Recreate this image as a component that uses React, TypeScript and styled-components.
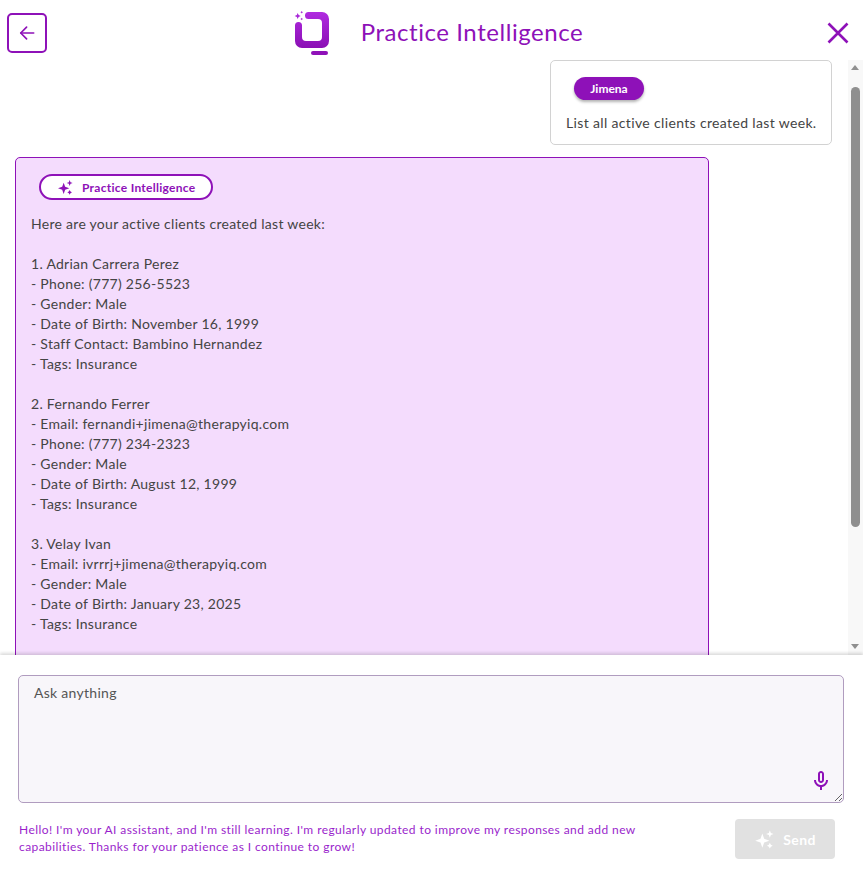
import { FC } from 'react';
import styled, { createGlobalStyle } from 'styled-components';

const PURPLE = '#8e11b8';

const GlobalStyle = createGlobalStyle`
  html, body {
    margin: 0;
    padding: 0;
    height: 100%;
    background: #fff;
  }
  * {
    box-sizing: border-box;
  }
  body {
    font-family: 'Lato', 'Open Sans', sans-serif;
    color: #444;
    overflow: hidden;
  }
`;

const SparkleIcon: FC<{ size: number; color: string }> = ({ size, color }) => (
  <svg width={size} height={size} viewBox="0 0 24 24" fill={color}>
    <path d="M10 5.500 12.200 11.800 18.500 14 12.200 16.200 10 22.500 7.800 16.200 1.500 14 7.800 11.800Z" />
    <path d="M19 1.500 20.200 4.800 23.500 6 20.200 7.200 19 10.500 17.800 7.200 14.500 6 17.800 4.800Z" />
    <path d="M19 16.500 20.200 18.800 22.500 20 20.200 21.200 19 23.500 17.800 21.200 15.500 20 17.800 18.800Z" />
  </svg>
);

const ClientReply: FC = () => (
  <ReplyText>{`Here are your active clients created last week:

1. Adrian Carrera Perez
- Phone: (777) 256-5523
- Gender: Male
- Date of Birth: November 16, 1999
- Staff Contact: Bambino Hernandez
- Tags: Insurance

2. Fernando Ferrer
- Email: fernandi+jimena@therapyiq.com
- Phone: (777) 234-2323
- Gender: Male
- Date of Birth: August 12, 1999
- Tags: Insurance

3. Velay Ivan
- Email: ivrrrj+jimena@therapyiq.com
- Gender: Male
- Date of Birth: January 23, 2025
- Tags: Insurance`}</ReplyText>
);

const App: FC = () => (
  <Root>
    <GlobalStyle />
    <Header>
      <BackButton aria-label="Back">
        <svg width="20" height="20" viewBox="0 0 24 24" fill="none" stroke={PURPLE} strokeWidth="2" strokeLinecap="round" strokeLinejoin="round">
          <path d="M20 12H4.500" />
          <path d="M11.500 5 4.500 12l7 7" />
        </svg>
      </BackButton>
      <Brand>
        <svg width="38" height="44" viewBox="0 0 38 44">
          <defs>
            <linearGradient id="logoFill" x1="0" y1="0" x2="0" y2="1">
              <stop offset="0" stopColor="#b02be0" />
              <stop offset="1" stopColor="#8a0fb4" />
            </linearGradient>
          </defs>
          <path
            fill="url(#logoFill)"
            d="M15.500 1H29a7 7 0 0 1 7 7V30a7 7 0 0 1-7 7H9a7 7 0 0 1-7-7V14.500a3.500 3.500 0 0 1 7 0V26a4 4 0 0 0 4 4H25a4 4 0 0 0 4-4V12a4 4 0 0 0-4-4H15.500a3.500 3.500 0 0 1 0-7Z"
          />
          <rect x="18" y="40" width="17" height="4" rx="2" fill="#8f11b8" />
          <path fill="#a827d8" d="M4.700 2 5.600 4.100 7.700 5 5.600 5.900 4.700 8 3.800 5.900 1.700 5 3.800 4.100Z" />
          <path fill="#a827d8" d="M8.700 0 9.200 .8 10 1.300 9.200 1.800 8.700 2.600 8.200 1.800 7.400 1.300 8.200 .8Z" />
          <path fill="#a827d8" d="M8.700 6.700 9.200 7.500 10 8 9.200 8.500 8.700 9.300 8.200 8.500 7.400 8 8.200 7.500Z" />
        </svg>
        <Title>Practice Intelligence</Title>
      </Brand>
      <CloseButton aria-label="Close">
        <svg width="22" height="22" viewBox="0 0 22 22" fill="none" stroke={PURPLE} strokeWidth="2.600">
          <path d="M1.500 1.500 20.500 20.500M20.500 1.500 1.500 20.500" />
        </svg>
      </CloseButton>
    </Header>

    <Body>
      <Conversation>
        <UserCard>
          <UserPill>Jimena</UserPill>
          <UserText>List all active clients created last week.</UserText>
        </UserCard>
        <ReplyCard>
          <ReplyPill>
            <SparkleIcon size={16} color={PURPLE} />
            Practice Intelligence
          </ReplyPill>
          <ClientReply />
        </ReplyCard>
      </Conversation>
      <ScrollRail>
        <ArrowUp />
        <ScrollTrack>
          <ScrollThumb />
        </ScrollTrack>
        <ArrowDown />
      </ScrollRail>
    </Body>

    <Composer>
      <InputWrap>
        <Prompt placeholder="Ask anything" />
        <MicButton aria-label="Voice input">
          <svg width="24" height="24" viewBox="0 0 24 24" fill={PURPLE}>
            <path d="M12 14c1.660 0 3-1.340 3-3V5c0-1.660-1.340-3-3-3S9 3.340 9 5v6c0 1.660 1.340 3 3 3zm-1-9c0-.55.45-1 1-1s1 .45 1 1v6c0 .55-.45 1-1 1s-1-.45-1-1V5zm6 6c0 2.760-2.240 5-5 5s-5-2.240-5-5H5c0 3.530 2.610 6.430 6 6.920V21h2v-3.080c3.390-.49 6-3.390 6-6.920h-2z" />
          </svg>
        </MicButton>
      </InputWrap>
      <ComposerFoot>
        <Notice>
          Hello! I'm your AI assistant, and I'm still learning. I'm regularly updated to improve my responses and add new
          capabilities. Thanks for your patience as I continue to grow!
        </Notice>
        <SendButton disabled>
          <SparkleIcon size={20} color="#fff" />
          Send
        </SendButton>
      </ComposerFoot>
    </Composer>
  </Root>
);

const Root = styled.div`
  height: 888px;
  width: 863px;
  display: flex;
  flex-direction: column;
  background: #fff;
`;

const Header = styled.header`
  height: 60px;
  flex: none;
  display: flex;
  align-items: flex-start;
  justify-content: space-between;
  padding: 13px 14px 0 7px;
`;

const BackButton = styled.button`
  width: 40px;
  height: 40px;
  padding: 0;
  display: flex;
  align-items: center;
  justify-content: center;
  background: #fff;
  border: 2px solid ${PURPLE};
  border-radius: 5px;
`;

const Brand = styled.div`
  display: flex;
  align-items: flex-start;
  gap: 30px;
  margin-left: 2px;
  margin-top: -2px;
`;

const Title = styled.h1`
  margin: 5px 0 0;
  font-size: 24px;
  line-height: 32px;
  font-weight: 400;
  letter-spacing: 0.56px;
  color: ${PURPLE};
`;

const CloseButton = styled.button`
  width: 22px;
  height: 22px;
  margin-top: 9px;
  padding: 0;
  background: none;
  border: 0;
  display: flex;
`;

const Body = styled.div`
  flex: 1;
  min-height: 0;
  display: flex;
`;

const Conversation = styled.div`
  flex: 1;
  min-width: 0;
  overflow: hidden;
  padding: 0 16px 0 15px;
  display: flex;
  flex-direction: column;
  align-items: flex-start;
`;

const ScrollRail = styled.div`
  flex: none;
  width: 15px;
  display: flex;
  flex-direction: column;
  background: #f8f8f8;
`;

const ArrowUp = styled.div`
  flex: none;
  width: 0;
  height: 0;
  margin: 5px 3px 5px;
  border-left: 4.5px solid transparent;
  border-right: 4.5px solid transparent;
  border-bottom: 5px solid #8f8f8f;
`;

const ArrowDown = styled.div`
  flex: none;
  width: 0;
  height: 0;
  margin: 5px 3px 6px;
  border-left: 4.5px solid transparent;
  border-right: 4.5px solid transparent;
  border-top: 5px solid #8f8f8f;
`;

const ScrollTrack = styled.div`
  flex: 1;
  padding: 12px 3px 0;
`;

const ScrollThumb = styled.div`
  height: 440px;
  border-radius: 5px;
  background: #8f8f8f;
`;

const UserCard = styled.div`
  flex: none;
  align-self: flex-end;
  width: 282px;
  height: 85px;
  padding: 16px 15px 0;
  background: #fff;
  border: 1px solid #d2d2d2;
  border-radius: 5px;
`;

const UserPill = styled.div`
  width: 70px;
  height: 23px;
  margin-left: 8px;
  border-radius: 12px;
  background: ${PURPLE};
  color: #fff;
  font-size: 12px;
  font-weight: 700;
  line-height: 23px;
  text-align: center;
  box-shadow: 0 2px 3px rgba(0, 0, 0, 0.3);
`;

const UserText = styled.div`
  margin-top: 13px;
  font-size: 14px;
  line-height: 20px;
  letter-spacing: 0.35px;
  white-space: nowrap;
`;

const ReplyCard = styled.div`
  flex: none;
  width: 694px;
  height: 652px;
  margin-top: 12px;
  padding: 16px 15px;
  background: #f4dcfd;
  border: 1px solid ${PURPLE};
  border-radius: 5px;
`;

const ReplyPill = styled.div`
  width: 174px;
  height: 26px;
  margin-left: 8px;
  display: flex;
  align-items: center;
  gap: 9px;
  padding-left: 16px;
  background: #fff;
  border: 2px solid ${PURPLE};
  border-radius: 13px;
  color: ${PURPLE};
  font-size: 12px;
  font-weight: 700;
  letter-spacing: 0.28px;
`;

const ReplyText = styled.div`
  margin-top: 14px;
  font-size: 14px;
  line-height: 20px;
  letter-spacing: 0.28px;
  white-space: pre-wrap;
`;

const Composer = styled.footer`
  flex: none;
  height: 233px;
  padding: 20px 19px 0 18px;
  background: #fff;
  box-shadow: 0 -2px 3px rgba(0, 0, 0, 0.14);
  position: relative;
`;

const InputWrap = styled.div`
  position: relative;
  height: 128px;
`;

const Prompt = styled.textarea`
  display: block;
  width: 100%;
  height: 128px;
  padding: 8px 15px;
  background: #f8f6fa;
  border: 1px solid #b09cbf;
  border-radius: 5px;
  outline: none;
  font-family: inherit;
  font-size: 14px;
  line-height: 18px;
  letter-spacing: 0.28px;
  color: #444;

  &::placeholder {
    color: #555;
    opacity: 1;
  }
`;

const MicButton = styled.button`
  position: absolute;
  right: 11px;
  bottom: 10px;
  width: 24px;
  height: 24px;
  padding: 0;
  background: none;
  border: 0;
`;

const ComposerFoot = styled.div`
  display: flex;
  align-items: flex-start;
  justify-content: space-between;
  margin-top: 16px;
  padding: 0 9px 0 1px;
`;

const Notice = styled.p`
  width: 640px;
  margin: 2px 0 0;
  font-size: 12px;
  line-height: 17px;
  letter-spacing: 0.42px;
  color: #9a1fcc;
`;

const SendButton = styled.button`
  width: 100px;
  height: 40px;
  display: flex;
  align-items: center;
  justify-content: center;
  gap: 9px;
  padding: 0;
  background: #e1e1e1;
  border: 0;
  border-radius: 4px;
  color: #fff;
  font-family: inherit;
  font-size: 14px;
  font-weight: 700;
  letter-spacing: 0.4px;
`;

export default App;
